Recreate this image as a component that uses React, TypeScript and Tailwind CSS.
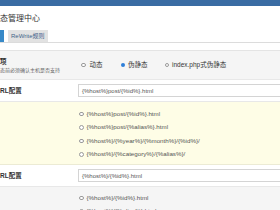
const font = "font-['Liberation_Sans','Noto_Sans_CJK_SC',sans-serif]";

const patterns = [
  "{%host%}post/{%id%}.html",
  "{%host%}post/{%alias%}.html",
  "{%host%}/{%year%}/{%month%}/{%id%}/",
  "{%host%}/{%category%}/{%alias%}/",
];

const idPatterns = ["{%host%}/{%id%}.html", "{%host%}/{%alias%}.html"];

function Radio({ checked }: { checked?: boolean }) {
  return checked ? (
    <span className="w-[4.5px] h-[4.5px] rounded-full bg-[#2f7fd8] shrink-0" />
  ) : (
    <span className="w-[4.5px] h-[4.5px] rounded-full border-[0.6px] border-[#999] bg-white shrink-0" />
  );
}

function Option({ text }: { text: string }) {
  return (
    <div className="flex items-center gap-[3px] h-[13.5px]">
      <Radio />
      <span className="text-[6.2px] leading-[8px] text-[#555] whitespace-nowrap">{text}</span>
    </div>
  );
}

function UrlRow({ value }: { value: string }) {
  return (
    <div className="flex items-center h-[22px] bg-white border-b border-[#e8e8e8]">
      <div className="w-[78px] text-[6.5px] font-bold text-[#333] leading-[8px]">RL配置</div>
      <div className="flex-1 h-[13px] border border-[#d4d4d4] bg-white flex items-center pl-[3px] -mr-[2px]">
        <span className="text-[6px] leading-[8px] text-[#555] whitespace-nowrap">{value}</span>
      </div>
    </div>
  );
}

export default function App() {
  return (
    <div className={`w-[280px] h-[210px] overflow-hidden bg-white ${font}`}>
      <div className="h-[6px] bg-[#3a6ca3]" />
      <div className="pt-[9px] text-[8px] leading-[8px] text-[#333]">态管理中心</div>
      <div className="mt-[7px] flex gap-[4px] border-b border-[#dcdcdc]">
        <div className="w-[4px] h-[12px] bg-[#3789c8]" />
        <div className="h-[12px] px-[3px] bg-[#e2e2e2] text-[6px] leading-[12px] text-[#44648a]">
          ReWrite规则
        </div>
      </div>

      <div className="mt-[7px] border-t border-[#e4e4e4]">
        <div className="flex items-center h-[29px] bg-[#f5f5f5] border-b border-[#e8e8e8]">
          <div className="w-[80px] flex flex-col gap-[2px]">
            <span className="text-[6.5px] font-bold leading-[7px] text-[#333]">项</span>
            <span className="text-[5px] leading-[6px] text-[#666] whitespace-nowrap">态前必须确认主机是否支持</span>
          </div>
          <div className="flex items-center text-[6.5px] leading-[8px] text-[#333]">
            <span className="flex items-center gap-[4px] ml-[1px]">
              <Radio />
              动态
            </span>
            <span className="flex items-center gap-[3px] ml-[18px]">
              <Radio checked />
              伪静态
            </span>
            <span className="flex items-center gap-[3px] ml-[17px]">
              <Radio />
              index.php式伪静态
            </span>
          </div>
        </div>

        <UrlRow value="{%host%}post/{%id%}.html" />

        <div className="bg-[#fefde6] pl-[79px] pt-[5px] pb-[3px] border-b border-[#ecebd4]">
          {patterns.map((p) => (
            <Option key={p} text={p} />
          ))}
        </div>

        <UrlRow value="{%host%}/{%id%}.html" />

        <div className="bg-[#f5f5f5] pl-[79px] pt-[4px]">
          {idPatterns.map((p) => (
            <Option key={p} text={p} />
          ))}
        </div>
      </div>
    </div>
  );
}
